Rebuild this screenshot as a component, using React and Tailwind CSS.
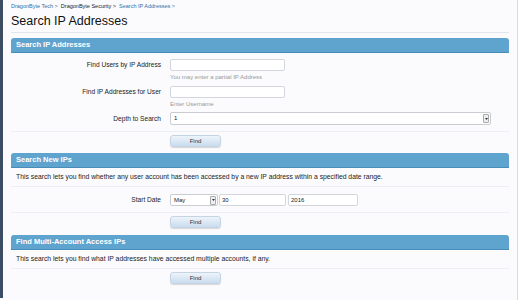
import React from "react";

const FONT = "font-['Liberation_Sans',Arial,sans-serif]";

const Bar = ({ title }) => (
  <div className="flex h-[15px] items-center rounded-t-[3px] border-b border-[#4a8cb8] bg-[#5fa3cf] px-[5px] text-[7.5px] font-bold text-white">
    {title}
  </div>
);

const FindButton = () => (
  <div className="flex">
    <div className="ml-[159px] flex h-[12px] w-[51px] items-center justify-center rounded-[3px] border border-[#c4d4e3] bg-gradient-to-b from-[#eef4fa] to-[#c9dcee] text-[6px] text-[#333] shadow-[0_1px_1px_rgba(0,0,0,0.15)]">
      Find
    </div>
  </div>
);

const Row = ({ label, children, className = "" }) => (
  <div className={`flex items-center ${className}`}>
    <div className="w-[151px] pr-[1px] text-right text-[6.6px] text-[#222]">{label}</div>
    <div className="ml-[8px] flex">{children}</div>
  </div>
);

const Input = ({ w, value }) => (
  <div
    className={`flex h-[12px] items-center rounded-[2px] border border-[#d3d7dd] bg-white px-[2px] text-[6px] text-[#222] ${w}`}
  >
    {value}
  </div>
);

const Select = ({ w, value }) => (
  <div
    className={`flex h-[12px] items-center justify-between rounded-[2px] border border-[#c9cdd3] bg-white pl-[3px] pr-[1px] text-[6px] text-[#222] ${w}`}
  >
    <span>{value}</span>
    <span className="flex h-[9px] w-[6px] items-center justify-center rounded-[1px] border border-[#aaa] bg-[#eee]">
      <svg width="3" height="2" viewBox="0 0 3 2">
        <path d="M0 0h3L1.5 2z" fill="#333" />
      </svg>
    </span>
  </div>
);

export default function App() {
  return (
    <div className={`flex h-[300px] w-[518px] overflow-hidden bg-[#fbfbfd] ${FONT}`}>
      <div className="h-[298px] w-[3px] bg-[#3c4c62]" />
      <div className="flex-1 px-[8px]">
        {/* breadcrumb */}
        <div className="flex h-[13px] items-center gap-[3px] text-[5.5px]">
          <span className="text-[#2f6fa8]">DragonByte Tech &gt;</span>
          <span className="text-[#222]">DragonByte Security &gt;</span>
          <span className="text-[#2f6fa8]">Search IP Addresses &gt;</span>
        </div>
        <div className="h-[20px] border-b border-[#e2e7ec] text-[12.5px] leading-[17px] text-[#111]">
          Search IP Addresses
        </div>

        {/* section 1 */}
        <div className="mt-[5px]">
          <Bar title="Search IP Addresses" />
          <Row label="Find Users by IP Address" className="mt-[6px]">
            <Input w="w-[115px]" />
          </Row>
          <div className="ml-[159px] mt-[2px] h-[9px] text-[6px] leading-[9px] text-[#999]">
            You may enter a partial IP Address
          </div>
          <Row label="Find IP Addresses for User" className="mt-[4px]">
            <Input w="w-[115px]" />
          </Row>
          <div className="ml-[159px] mt-[2px] h-[9px] text-[6px] leading-[9px] text-[#999]">
            Enter Username
          </div>
          <Row label="Depth to Search" className="mt-[3px]">
            <Select w="w-[321px] h-[13px]" value="1" />
          </Row>
          <div className="mt-[6px] border-b border-[#ebeef2]" />
          <div className="mt-[3px]">
            <FindButton />
          </div>
        </div>

        {/* section 2 */}
        <div className="mt-[6px]">
          <Bar title="Search New IPs" />
          <div className="flex h-[19px] items-center border-b border-[#ebeef2] px-[5px] text-[6.8px] text-[#222]">
            This search lets you find whether any user account has been accessed by a new IP address within a specified date range.
          </div>
          <Row label="Start Date" className="mt-[7px]">
            <Select w="w-[48px]" value="May" />
            <div className="ml-[1px]">
              <Input w="w-[67px]" value="30" />
            </div>
            <div className="ml-[2px]">
              <Input w="w-[70px]" value="2016" />
            </div>
          </Row>
          <div className="mt-[6px] border-b border-[#ebeef2]" />
          <div className="mt-[3px]">
            <FindButton />
          </div>
        </div>

        {/* section 3 */}
        <div className="mt-[7px]">
          <Bar title="Find Multi-Account Access IPs" />
          <div className="flex h-[19px] items-center border-b border-[#ebeef2] px-[5px] text-[6.8px] text-[#222]">
            This search lets you find what IP addresses have accessed multiple accounts, if any.
          </div>
          <div className="mt-[3px]">
            <FindButton />
          </div>
        </div>
      </div>
      <div className="w-px bg-[#d9dadf]" />
    </div>
  );
}
